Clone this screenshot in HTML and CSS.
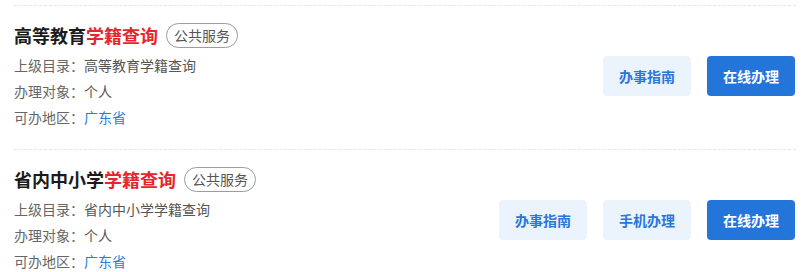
FILE: index.html
```html
<!DOCTYPE html>
<html lang="zh-CN">
<head>
<meta charset="utf-8">
<link rel="stylesheet" href="styles.css">
</head>
<body>
<div class="list">
  <div class="item">
    <div class="info">
      <div class="title-row">
        <span class="title">高等教育<em>学籍查询</em></span>
        <span class="tag">公共服务</span>
      </div>
      <div class="meta">上级目录：<span>高等教育学籍查询</span></div>
      <div class="meta">办理对象：<span>个人</span></div>
      <div class="meta">可办地区：<span class="link">广东省</span></div>
    </div>
    <div class="actions">
      <a class="btn light">办事指南</a>
      <a class="btn primary">在线办理</a>
    </div>
  </div>
  <div class="item">
    <div class="info">
      <div class="title-row">
        <span class="title">省内中小学<em>学籍查询</em></span>
        <span class="tag">公共服务</span>
      </div>
      <div class="meta">上级目录：<span>省内中小学学籍查询</span></div>
      <div class="meta">办理对象：<span>个人</span></div>
      <div class="meta">可办地区：<span class="link">广东省</span></div>
    </div>
    <div class="actions">
      <a class="btn light">办事指南</a>
      <a class="btn light">手机办理</a>
      <a class="btn primary">在线办理</a>
    </div>
  </div>
</div>
</body>
</html>
```
FILE: styles.css
```css
* { box-sizing: border-box; }
html, body { margin: 0; padding: 0; background: #fff; }
body {
  font-family: "Noto Sans CJK SC", "Noto Sans", sans-serif;
  color: #333;
}
.list { padding: 5px 16px 0 14px; }
.item {
  display: flex;
  align-items: center;
  justify-content: space-between;
  border-top: 1px dashed #e6e6e6;
  padding: 16px 1px 19px 0;
}
.info { display: flex; flex-direction: column; }
.title-row {
  display: flex;
  align-items: center;
  height: 26px;
  gap: 8px;
  margin-bottom: 4px;
}
.title {
  font-size: 18px;
  font-weight: 700;
  color: #1b1b1b;
  line-height: 26px;
}
.title em { font-style: normal; color: #e6262c; }
.tag {
  display: inline-flex;
  align-items: center;
  height: 25px;
  padding: 0 7px;
  border: 1px solid #9c9c9c;
  border-radius: 13px;
  font-size: 14px;
  color: #555;
}
.meta {
  font-size: 14px;
  line-height: 26px;
  color: #666;
}
.meta span { color: #555; }
.meta span.link { color: #2a7bd8; }
.actions { display: flex; gap: 16px; }
.btn {
  display: inline-flex;
  align-items: center;
  justify-content: center;
  width: 88px;
  height: 40px;
  border-radius: 4px;
  font-size: 14px;
  font-weight: 700;
}
.btn.light { background: #ebf4fc; color: #2a76d9; }
.btn.primary { background: #2375da; color: #fff; }
```
